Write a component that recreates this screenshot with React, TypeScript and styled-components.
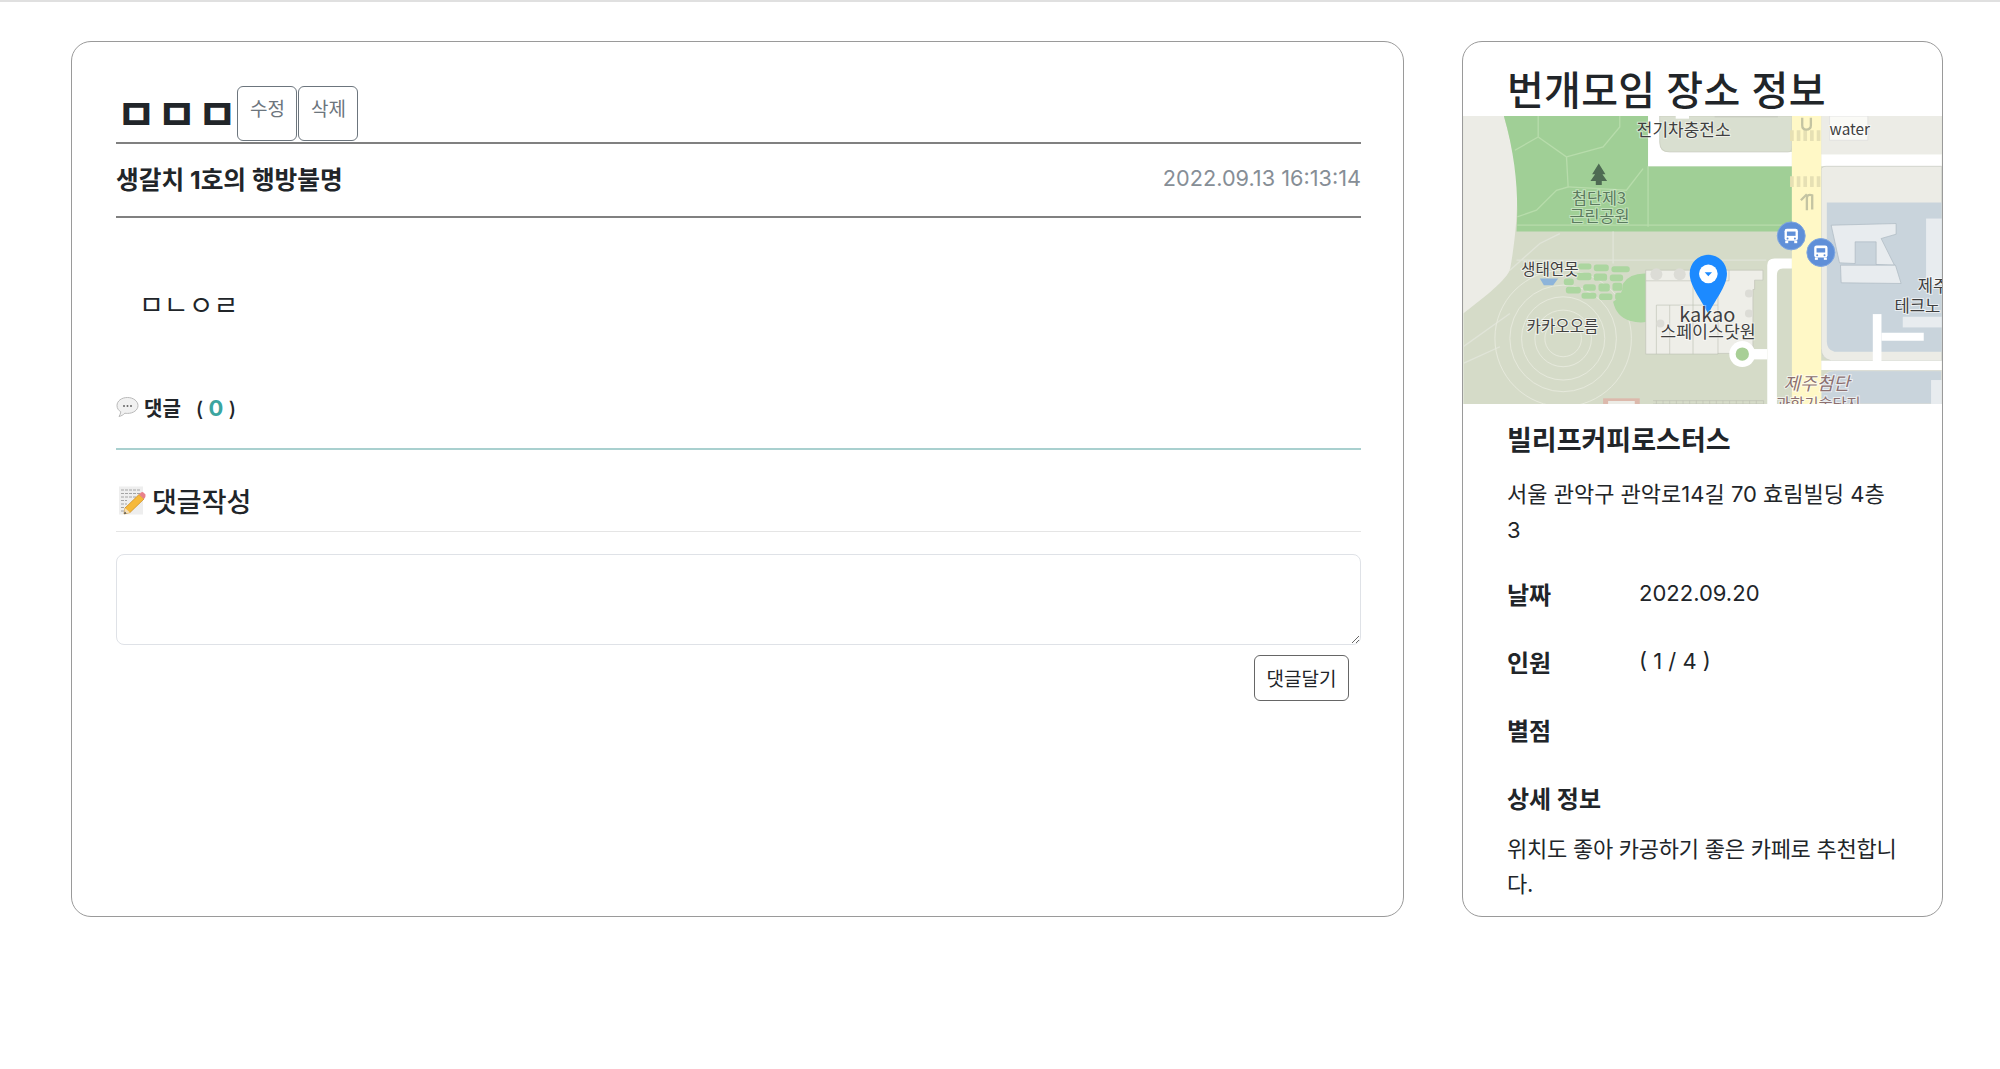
import React from "react";
import styled, { createGlobalStyle } from "styled-components";

const GlobalStyle = createGlobalStyle`
  html, body { margin: 0; padding: 0; background: #fff; }
  body {
    font-family: Inter, "Noto Sans CJK KR", sans-serif;
    color: #212529;
  }
  * { box-sizing: border-box; }
`;

const Page = styled.div`
  border-top: 2px solid #e0e0e0;
  height: 1069px;
  padding: 39px 57px 0 71px;
  display: flex;
  gap: 58px;
  align-items: flex-start;
`;

const Card = styled.section<{ $width: number }>`
  width: ${(p) => p.$width}px;
  height: 876px;
  flex: none;
  border: 1px solid #9a9a9a;
  border-radius: 20px;
  overflow: hidden;
`;

const PostBody = styled.div`
  padding: 44px 42px 0 44px;
`;

const TitleRow = styled.div`
  display: flex;
  align-items: flex-end;
  height: 55px;
`;

const PostTitle = styled.h1`
  margin: 0;
  font-size: 44px;
  line-height: 52px;
  font-weight: 700;
  height: 52px;
`;

const SmallButton = styled.button`
  width: 60px;
  height: 55px;
  padding: 0 0 12px;
  margin-right: 1px;
  background: #fff;
  border: 1px solid #6c757d;
  border-radius: 6px;
  color: #6c757d;
  font: inherit;
  font-size: 19px;
`;

const MetaRow = styled.div`
  display: flex;
  align-items: center;
  justify-content: space-between;
  height: 76px;
  margin-top: 1px;
  border-top: 2px solid #808080;
  border-bottom: 2px solid #808080;
  padding-bottom: 5px;
`;

const Author = styled.div`
  font-size: 24.7px;
  font-weight: 700;
`;

const PostDate = styled.div`
  font-size: 21.7px;
  color: #868e96;
`;

const Content = styled.p`
  margin: 70px 0 0 23px;
  height: 36px;
  font-size: 27px;
  line-height: 36px;
`;

const CommentHead = styled.div`
  display: flex;
  align-items: center;
  gap: 5px;
  height: 72px;
  padding-top: 12px;
  margin-top: 54px;
  border-bottom: 2px solid #a9d0cf;
  padding-bottom: 23px;
  font-size: 20px;
  font-weight: 700;
`;

const Count = styled.span`
  margin-left: 10px;
  font-weight: 500;
  white-space: pre;

  b {
    color: #3ba5a0;
    font-size: 22px;
    font-weight: 700;
  }
`;

const WriteHead = styled.h2`
  display: flex;
  align-items: center;
  gap: 6px;
  margin: 0;
  padding: 20px 0 0 2px;
  height: 82px;
  border-bottom: 1px solid #e5e5e5;
  font-size: 27px;
  font-weight: 500;
`;

const CommentBox = styled.textarea`
  display: block;
  width: 100%;
  height: 91px;
  margin-top: 22px;
  border: 1px solid #dfe2e7;
  border-radius: 8px;
  outline: none;
  font: inherit;
`;

const SubmitRow = styled.div`
  display: flex;
  justify-content: flex-end;
  margin-top: 10px;
  padding-right: 12px;
`;

const SubmitButton = styled.button`
  width: 95px;
  height: 46px;
  padding: 0 0 2px;
  background: #fff;
  border: 1px solid #666;
  border-radius: 6px;
  color: #212529;
  font: inherit;
  font-size: 19px;
`;

const PlaceTitle = styled.h2`
  margin: 0;
  height: 74px;
  padding-left: 44px;
  font-size: 40px;
  letter-spacing: 0.3px;
  line-height: 98px;
  font-weight: 500;
  white-space: nowrap;
  overflow: hidden;
`;

const MapFrame = styled.div`
  height: 288px;
  overflow: hidden;

  svg {
    display: block;
  }
`;

const PlaceInfo = styled.div`
  padding: 19px 20px 0 44px;
`;

const PlaceName = styled.h3`
  margin: 0;
  font-size: 27px;
  line-height: 36px;
  font-weight: 700;
`;

const Address = styled.p`
  margin: 18px 0 0;
  font-size: 22px;
  line-height: 35.5px;
`;

const InfoList = styled.div`
  margin-top: 28px;
  display: grid;
  gap: 34px;
`;

const InfoRow = styled.div`
  display: flex;
  align-items: center;
  height: 34px;
  font-size: 22px;
`;

const InfoLabel = styled.div`
  width: 132px;
  font-size: 24px;
  font-weight: 700;
`;

const Detail = styled.p`
  margin: 18px 0 0;
  font-size: 22px;
  letter-spacing: -0.25px;
  line-height: 35px;
`;

const Label = styled.text<{ $color?: string; $halo?: string; $italic?: boolean }>`
  font-family: "Noto Sans CJK KR", sans-serif;
  fill: ${(p) => p.$color || "#3f3f3f"};
  stroke: ${(p) => p.$halo || "rgba(255,255,255,.65)"};
  stroke-width: 6px;
  paint-order: stroke;
  font-style: ${(p) => (p.$italic ? "italic" : "normal")};
`;

// pond cells beside the park hill, [x, y, w, h]
const pondCells = [
  [415, 700, 40, 18], [462, 703, 45, 20], [515, 708, 55, 18],
  [372, 745, 30, 20], [410, 728, 45, 22], [462, 730, 40, 22], [510, 733, 40, 20],
  [378, 770, 45, 20], [430, 762, 38, 20], [476, 760, 34, 24], [518, 758, 30, 24],
  [425, 788, 45, 18], [478, 790, 40, 20], [526, 788, 34, 22],
];

function BubbleIcon() {
  return (
    <svg width="23" height="23" viewBox="0 0 23 23">
      <path d="M11.5 1.5C5.6 1.5 1 4.9 1 9.6c0 2.7 1.500 4.800 3.800 6.200-.2 1.700-.9 3.300-1.800 4.700 2.300-.5 4.400-1.700 5.900-3.300.8.200 1.700.2 2.600.2 5.900 0 10.500-3.400 10.500-7.800S17.400 1.500 11.500 1.500z" fill="#f1f1f1" stroke="#b9b9b9" strokeWidth="1" />
      <circle cx="8" cy="10" r="1" fill="#666" />
      <circle cx="11.500" cy="10" r="1" fill="#666" />
      <circle cx="15" cy="10" r="1" fill="#666" />
    </svg>
  );
}

function MemoIcon() {
  return (
    <svg width="28" height="29" viewBox="0 0 28 29">
      <rect x="1" y="0.500" width="24" height="28" fill="#eeeeee" />
      {[4, 7.500, 11, 14.500, 18, 21.500, 25].map((y) => (
        <path key={y} d={`M3 ${y}h${y > 14 ? 6 : 19}`} stroke="#9a9a9a" strokeWidth="0.900" strokeDasharray="3 1" />
      ))}
      <path d="M7 22 L21 8.500 L26 13 L12 26.500 L6 28 Z" fill="#f6b93b" stroke="#c98a1c" strokeWidth="0.700" />
      <path d="M21 8.500 L23 6.500 Q24.500 5.500 26 7 L27.500 8.500 Q28 10.500 26 13 Z" fill="#e8808a" />
      <path d="M7 22 L6 28 L12 26.500 Z" fill="#f4dfb8" />
      <path d="M6.800 25.500 L6 28 L8.500 27.400 Z" fill="#444" />
    </svg>
  );
}

function BusStop({ cx, cy }: { cx: number; cy: number }) {
  return (
    <g transform={`translate(${cx} ${cy})`}>
      <circle r="42" fill="#5f8fd8" stroke="#7ea6df" strokeWidth="3" />
      <rect x="-20" y="-21" width="40" height="36" rx="7" fill="#fff" />
      <rect x="-13" y="-13" width="26" height="13" fill="#5f8fd8" />
      <rect x="-18" y="15" width="9" height="7" fill="#fff" />
      <rect x="9" y="15" width="9" height="7" fill="#fff" />
      <circle cx="-11" cy="8" r="3" fill="#5f8fd8" />
      <circle cx="11" cy="8" r="3" fill="#5f8fd8" />
    </g>
  );
}

// map tile, drawn in 3x units so the values read straight off a zoomed crop
function MapTile() {
  return (
    <svg width="479" height="288" viewBox="70 257 1437 865">
      <rect x="70" y="257" width="1437" height="865" fill="#d5dbc8" />
      <path d="M70 257H192C205 310 232 390 232 490C232 560 225 640 210 720C190 760 120 810 70 850Z" fill="#ecece6" />
      <path d="M192 257H625V408H1057V604H230C236 500 230 390 192 257Z" fill="#a0cf96" />
      <g fill="none" stroke="#b7dcab" strokeWidth="4">
        <path d="M295 257V320L225 360M295 320L380 380L385 470L350 480L290 540L232 560" />
        <path d="M380 380L490 350L540 290V257M385 470L560 480L610 415M625 408V590M232 585H1057" />
      </g>
      <g fill="none" stroke="#e0e4d8" strokeWidth="4">
        <path d="M520 604V700M210 720L300 640L360 610M230 690H980" />
        <path d="M70 950L210 850M70 1000L180 950" />
      </g>
      <path d="M625 257H660V340Q660 365 685 365H1057V408H625Z" fill="#fff" />
      <path d="M660 257H1057V350Q1057 365 1045 365H690Q660 365 660 335Z" fill="#d9dfd0" stroke="#c8ccc0" strokeWidth="2" />
      <rect x="825" y="257" width="190" height="4" fill="#c8ccc0" />
      <rect x="708" y="257" width="40" height="8" fill="#fff" />
      <path d="M1012 1122V735Q1012 715 1030 715H1057V685H1005Q983 685 983 705V1122Z" fill="#fff" />
      <path d="M940 957H983V988H940Z" fill="#fff" />
      <path d="M1145 257H1507V372H1145Z" fill="#ecece6" />
      <path d="M1170 257H1285V330H1170Z" fill="#fafaf6" stroke="#ddd" strokeWidth="2" />
      <path d="M1145 372H1507V408H1145Z" fill="#fff" />
      <path d="M1145 420Q1145 408 1160 408H1507V992H1175Q1145 985 1145 955Z" fill="#ecece6" stroke="#c9ccc5" strokeWidth="2" />
      <path d="M1162 517H1507V965H1185Q1162 960 1162 935Z" fill="#c9d4dc" />
      <path d="M1175 585L1370 580V612L1325 625L1365 705L1310 703V635L1247 635V700L1200 698Z" fill="#e8ecef" stroke="#aab6c0" strokeWidth="2" />
      <path d="M1203 705H1368L1385 760L1205 758Z" fill="#e8ecef" stroke="#aab6c0" strokeWidth="2" />
      <rect x="1460" y="565" width="47" height="200" fill="#e8ecef" />
      <rect x="1390" y="860" width="117" height="32" fill="#e8ecef" />
      <rect x="1300" y="852" width="26" height="145" fill="#fff" />
      <rect x="1326" y="908" width="127" height="24" fill="#fff" />
      <rect x="1145" y="992" width="362" height="28" fill="#fff" />
      <path d="M1145 1060Q1150 1022 1185 1022H1507V1122H1145Z" fill="#c9d4dc" stroke="#dfe0d8" strokeWidth="3" />
      <rect x="1475" y="1050" width="32" height="72" fill="#e8ecef" />
      <rect x="1057" y="257" width="88" height="865" fill="#fff8c6" />
      <path d="M1057 300V332M1077 300V332M1097 300V332M1117 300V332M1137 300V332M1057 438V470M1077 438V470M1097 438V470M1117 438V470M1137 438V470" stroke="#e6e0b4" strokeWidth="11" />
      <path d="M1088 262V285Q1088 298 1100 298Q1114 298 1114 285V262M1102 540V505Q1102 490 1118 495V538M1084 510L1102 492" fill="none" stroke="#c4c4a2" strokeWidth="7" />
      <g fill="none" stroke="#e6e9dc" strokeWidth="3">
        <circle cx="370" cy="925" r="55" />
        <circle cx="370" cy="925" r="85" />
        <circle cx="370" cy="925" r="125" />
        <circle cx="370" cy="925" r="160" />
        <circle cx="370" cy="925" r="205" />
      </g>
      <g fill="#acd6a0">
        {pondCells.map(([x, y, w, h]) => (
          <rect key={`${x}-${y}`} x={x} y={y} width={w} height={h} rx="8" />
        ))}
      </g>
      <path d="M620 730Q570 728 550 760Q548 800 520 815Q530 860 570 872Q600 880 620 875Z" fill="#acd6a0" />
      <path d="M300 745H355L340 765H312Z" fill="#8db4da" />
      <path d="M618 720H970V750H945V778H940V970H835V972H618Z" fill="#eeeee8" stroke="#bfc2b7" strokeWidth="2" />
      <path d="M618 752H868M760 755V972M650 825H835M650 825V972M690 825V972M835 755V972M868 720V752" fill="none" stroke="#bfc2b7" strokeWidth="2" />
      <g fill="#dcdcd6">
        <circle cx="650" cy="732" r="18" />
        <circle cx="720" cy="732" r="18" />
        <circle cx="928" cy="790" r="12" />
        <circle cx="928" cy="850" r="12" />
        <circle cx="662" cy="880" r="12" />
      </g>
      <circle cx="908" cy="972" r="39" fill="#fff" />
      <circle cx="908" cy="972" r="20" fill="#a8cf96" />
      <rect x="490" y="1105" width="110" height="17" fill="#dcb9ac" />
      <rect x="505" y="1113" width="80" height="9" fill="#ecece6" />
      <path d="M640 1112H972V1122H640M650 1112V1122M670 1112V1122M690 1112V1122M710 1112V1122M730 1112V1122M750 1112V1122M770 1112V1122M790 1112V1122M810 1112V1122M830 1112V1122M850 1112V1122M870 1112V1122M890 1112V1122M910 1112V1122M930 1112V1122M950 1112V1122" fill="none" stroke="#bcc0b2" strokeWidth="2" />
      <path d="M477 400L497 432H488L502 452H486V464H468V452H452L466 432H457Z" fill="#4e6b53" />
      <BusStop cx={1055} cy={617} />
      <BusStop cx={1144} cy={667} />
      <Label x="732" y="318" fontSize="51" textAnchor="middle" $halo="rgba(255,255,255,.5)">전기차충전소</Label>
      <Label x="1231" y="314" fontSize="46" textAnchor="middle">water</Label>
      <Label x="478" y="520" fontSize="49" textAnchor="middle" $color="#5b7a5e" $halo="rgba(220,240,215,.6)">첨단제3</Label>
      <Label x="479" y="575" fontSize="49" textAnchor="middle" $color="#5b7a5e" $halo="rgba(220,240,215,.6)">근린공원</Label>
      <Label x="330" y="735" fontSize="47" textAnchor="middle">생태연못</Label>
      <Label x="368" y="905" fontSize="47" textAnchor="middle">카카오오름</Label>
      <Label x="1435" y="785" fontSize="50">제주</Label>
      <Label x="1365" y="845" fontSize="50">테크노</Label>
      <Label x="1032" y="1080" fontSize="54" $color="#8c7070" $italic>제주첨단</Label>
      <Label x="1010" y="1136" fontSize="46" $color="#8c7070">과학기술단지</Label>
      <path d="M806 674C775 674 750 699 750 730C750 770 790 815 806 852C822 815 862 770 862 730C862 699 837 674 806 674Z" fill="#1c8aff" />
      <circle cx="806" cy="731" r="28" fill="#fff" />
      <path d="M795 726H817L806 738Z" fill="#1c8aff" />
      <Label x="803" y="875" fontSize="60" textAnchor="middle" $halo="rgba(255,255,255,.4)">kakao</Label>
      <Label x="805" y="925" fontSize="52" textAnchor="middle" $halo="rgba(255,255,255,.5)">스페이스닷원</Label>
    </svg>
  );
}

export default function App() {
  return (
    <>
      <GlobalStyle />
      <Page>
        <Card $width={1333}>
          <PostBody>
            <TitleRow>
              <PostTitle>ㅁㅁㅁ</PostTitle>
              <SmallButton>수정</SmallButton>
              <SmallButton>삭제</SmallButton>
            </TitleRow>
            <MetaRow>
              <Author>생갈치 1호의 행방불명</Author>
              <PostDate>2022.09.13 16:13:14</PostDate>
            </MetaRow>
            <Content>ㅁㄴㅇㄹ</Content>
            <CommentHead>
              <BubbleIcon />
              댓글
              <Count>
                ( <b>0</b> )
              </Count>
            </CommentHead>
            <WriteHead>
              <MemoIcon />
              댓글작성
            </WriteHead>
            <CommentBox />
            <SubmitRow>
              <SubmitButton>댓글달기</SubmitButton>
            </SubmitRow>
          </PostBody>
        </Card>
        <Card $width={481}>
          <PlaceTitle>번개모임 장소 정보</PlaceTitle>
          <MapFrame>
            <MapTile />
          </MapFrame>
          <PlaceInfo>
            <PlaceName>빌리프커피로스터스</PlaceName>
            <Address>
              서울 관악구 관악로14길 70 효림빌딩 4층
              <br />3
            </Address>
            <InfoList>
              <InfoRow>
                <InfoLabel>날짜</InfoLabel>
                2022.09.20
              </InfoRow>
              <InfoRow>
                <InfoLabel>인원</InfoLabel>( 1 / 4 )
              </InfoRow>
              <InfoRow>
                <InfoLabel>별점</InfoLabel>
              </InfoRow>
              <InfoRow>
                <InfoLabel>상세 정보</InfoLabel>
              </InfoRow>
            </InfoList>
            <Detail>
              위치도 좋아 카공하기 좋은 카페로 추천합니
              <br />
              다.
            </Detail>
          </PlaceInfo>
        </Card>
      </Page>
    </>
  );
}
